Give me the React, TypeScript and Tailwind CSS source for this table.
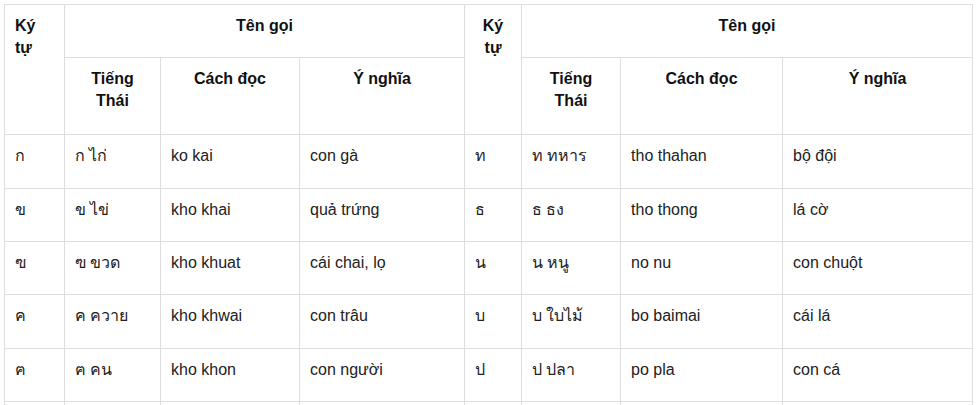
import React from "react";

const rows: string[][] = [
  ["ก", "ก ไก่", "ko kai", "con gà", "ท", "ท ทหาร", "tho thahan", "bộ đội"],
  ["ข", "ข ไข่", "kho khai", "quả trứng", "ธ", "ธ ธง", "tho thong", "lá cờ"],
  ["ฃ", "ฃ ขวด", "kho khuat", "cái chai, lọ", "น", "น หนู", "no nu", "con chuột"],
  ["ค", "ค ควาย", "kho khwai", "con trâu", "บ", "บ ใบไม้", "bo baimai", "cái lá"],
  ["ฅ", "ฅ คน", "kho khon", "con người", "ป", "ป ปลา", "po pla", "con cá"],
];

const heights = ["h-[54px]", "h-[53px]", "h-[53px]", "h-[54px]", "h-[53px]"];

const th = "border border-[#dedede] align-top pt-[10px] px-[10px] font-bold text-[#111] text-center";
const td = "border border-[#dedede] align-top pt-[10px] px-[10px] text-[#222] text-left";

export default function App() {
  return (
    <div className="bg-white w-[980px] h-[405px] overflow-hidden pl-[4px] pt-[4px]" style={{ fontFamily: '"Liberation Sans", Arial, "Noto Sans", sans-serif' }}>
      <table className="table-fixed border-collapse w-[968px] text-[16px] leading-[22px]">
        <colgroup>
          <col className="w-[60px]" />
          <col className="w-[96px]" />
          <col className="w-[139px]" />
          <col className="w-[165px]" />
          <col className="w-[57px]" />
          <col className="w-[99px]" />
          <col className="w-[162px]" />
          <col className="w-[190px]" />
        </colgroup>
        <thead>
          <tr className="h-[53px]">
            <th rowSpan={2} className={th + " !text-left"}>Ký tự</th>
            <th colSpan={3} className={th}>Tên gọi</th>
            <th rowSpan={2} className={th}>Ký tự</th>
            <th colSpan={3} className={th}>Tên gọi</th>
          </tr>
          <tr className="h-[77px]">
            <th className={th}>Tiếng Thái</th>
            <th className={th}>Cách đọc</th>
            <th className={th}>Ý nghĩa</th>
            <th className={th}>Tiếng Thái</th>
            <th className={th}>Cách đọc</th>
            <th className={th}>Ý nghĩa</th>
          </tr>
        </thead>
        <tbody>
          {rows.map((r, i) => (
            <tr key={i} className={heights[i]}>
              {r.map((c, j) => (
                <td key={j} className={td}>{c}</td>
              ))}
            </tr>
          ))}
          <tr className="h-[54px]">
            {[0, 1, 2, 3, 4, 5, 6, 7].map((j) => (
              <td key={j} className={td}></td>
            ))}
          </tr>
        </tbody>
      </table>
    </div>
  );
}
